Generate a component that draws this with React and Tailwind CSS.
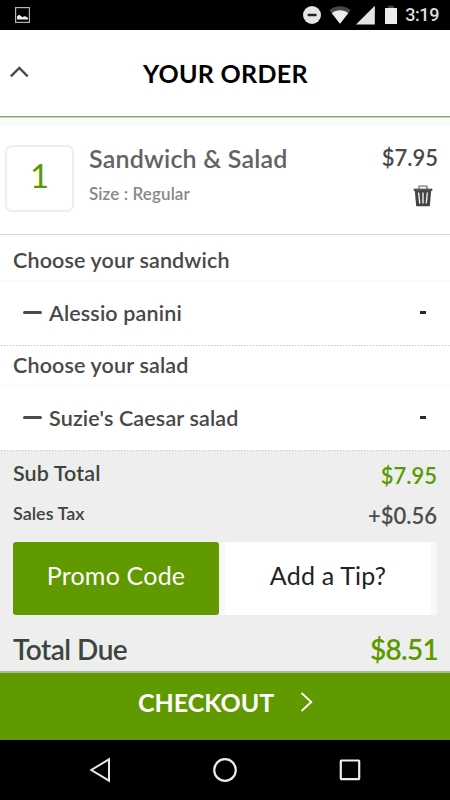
import React from "react";

function StatusBar() {
  return (
    <div className="flex h-[30px] items-center justify-between bg-black pl-[15px] pr-[11px]">
      <svg width="15" height="16" viewBox="0 0 15 16">
        <rect x="0.6" y="0.6" width="13.8" height="14.8" fill="none" stroke="#b4b4b4" strokeWidth="1.2" />
        <path d="M2 12.5V9.5L4 7.7L6 9L7.5 10.2L9 9.3L11 9.4L13 11V12.5Z" fill="#ededed" />
      </svg>
      <div className="flex items-center">
        <svg width="102" height="30" viewBox="0 0 102 30">
          <circle cx="9" cy="15" r="9" fill="#e6e6e6" />
          <rect x="4.6" y="13.8" width="9" height="2.4" rx="0.6" fill="#222" />
          <path d="M26.3 10.3C32.3 4.9 41.7 4.9 47.7 10.3L37 23.8Z" fill="#484848" />
          <path d="M28.8 13.2C33.8 9.4 40.2 9.4 45.2 13.2L37 23.8Z" fill="#ececec" />
          <path d="M53 24.6L71.8 5.8V24.6Z" fill="#e4e4e4" />
          <rect x="85.2" y="5.7" width="5.6" height="3" fill="#444" />
          <rect x="82" y="8" width="12" height="16" rx="0.5" fill="#ececec" />
        </svg>
        <span className="w-[34px] text-right font-[Roboto,sans-serif] text-[18px] font-medium leading-[32px] tracking-[-0.4px] text-[#dedede]">3:19</span>
      </div>
    </div>
  );
}

function Group({ title, option, headClass }) {
  return (
    <section className="text-[21.5px] tracking-[0.15px]">
      <h3 className={`flex items-center border-b-2 border-[#fbfbfb] pl-[13px] ${headClass}`}>{title}</h3>
      <div className="flex h-[63px] items-center pb-px pl-[23px] pr-[24px]">
        <span className="h-[3px] w-[19px] rounded-sm bg-[#4c4c4c]" />
        <span className="ml-[7px]">{option}</span>
        <span className="ml-auto h-[3px] w-[6px] bg-[#2a2a2a]" />
      </div>
      <svg className="block" width="450" height="1">
        <line x1="1" y1="0.5" x2="450" y2="0.5" stroke="#c6c6c6" strokeDasharray="1.5 1.5" />
      </svg>
    </section>
  );
}

export default function App() {
  return (
    <div className="flex h-[800px] w-[450px] flex-col overflow-hidden whitespace-nowrap bg-white font-[Lato,sans-serif] font-semibold text-[#484848]">
      <StatusBar />

      <header className="flex h-[87px] items-center border-b border-[#82a76b] pl-[10px]">
        <svg className="-mt-[2px]" width="19" height="12" viewBox="0 0 19 12">
          <path d="M0.9 10.3L9.3 2L17.7 10.3" fill="none" stroke="#4a4a4a" strokeWidth="2.4" />
        </svg>
        <h1 className="ml-[114px] text-[25px] font-bold leading-[30px] tracking-[0.3px] text-black">YOUR ORDER</h1>
      </header>

      <div className="h-[9px] border-t border-[#c9d8bd] bg-[#fbfbfb]" />

      <section className="flex h-[109px] border-b border-[#d8d8d8]">
        <div className="ml-[5px] mt-[19px] flex h-[67px] w-[69px] justify-center rounded-[7px] border-2 border-[#eeeeee] pt-[8px] text-[33px] font-normal leading-[40px] text-[#589a00]">
          <span>1</span>
        </div>
        <div className="ml-[15px] pt-[17px]">
          <h2 className="text-[25px] leading-[30px] tracking-[0.2px] text-[#636363]">Sandwich &amp; Salad</h2>
          <p className="mt-[10px] text-[17px] leading-[22px] tracking-[0.1px] text-[#888888]">Size : Regular</p>
        </div>
        <div className="ml-auto flex flex-col items-end pr-[12px] pt-[17px]">
          <span className="text-[22px] leading-[30px]">$7.95</span>
          <svg className="mr-[5px] mt-[12px]" width="20" height="22" viewBox="0 0 20 22">
            <path d="M6 4V1.2H14V4" fill="none" stroke="#777" strokeWidth="1.3" />
            <path d="M0.7 3.6H19.3V6H0.7Z" fill="#555" />
            <path d="M1.8 5.5H18.2L16.8 21.3H3.2Z" fill="#444" />
            <path d="M5.6 7.5L6.8 18.5M10 7.5V18.5M14.4 7.5L13.2 18.5" stroke="#eee" strokeWidth="1.4" />
          </svg>
        </div>
      </section>

      <Group title="Choose your sandwich" option="Alessio panini" headClass="h-[47px] pt-[6px]" />
      <Group title="Choose your salad" option="Suzie's Caesar salad" headClass="h-[41px]" />

      <section className="flex h-[221px] flex-col bg-[#eeeeee] px-[13px] text-[#3c463c]">
        <div className="flex h-[44px] justify-between pt-[7px] leading-[30px]">
          <span className="text-[21.5px] tracking-[0.1px]">Sub Total</span>
          <span className="pt-[3px] text-[22px] text-[#589a00]">$7.95</span>
        </div>
        <div className="flex h-[47px] justify-between pt-[2px] leading-[30px]">
          <span className="pt-px text-[18px]">Sales Tax</span>
          <span className="pt-[4px] text-[22px] text-[#4c4c4c]">+$0.56</span>
        </div>
        <div className="flex h-[73px] text-[25px] font-normal leading-[67px] tracking-[0.2px]">
          <div className="w-[206px] rounded-[3px] bg-[#619900] text-center text-white">Promo Code</div>
          <div className="flex w-[218px] rounded-r-[3px] bg-[#f8f8f8] pl-[6px]">
            <div className="w-[206px] bg-white text-center text-[#222]">Add a Tip?</div>
          </div>
        </div>
        <div className="flex justify-between pt-[16px] text-[28px] leading-[36px]">
          <span className="tracking-[-0.5px]">Total Due</span>
          <span className="-mr-px tracking-[-0.7px] text-[#589a00]">$8.51</span>
        </div>
      </section>

      <button className="flex h-[69px] items-center border-t-2 border-[#adb99d] bg-[#619900] pb-[7px] pl-[138px] text-[25px] font-bold text-white">
        <span className="w-[136px] text-left">CHECKOUT</span>
        <svg className="-mt-[3px] ml-[26px]" width="14" height="20" viewBox="0 0 14 20">
          <path d="M1.5 1L11.3 10L1.5 19" fill="none" stroke="#fff" strokeWidth="1.8" />
        </svg>
      </button>

      <nav className="flex h-[60px] items-center bg-black pl-[89px]">
        <svg width="22" height="26" viewBox="0 0 22 26" fill="none" stroke="#e6e6e6" strokeWidth="2">
          <path d="M20 2.3V23.7L2.3 13Z" />
        </svg>
        <svg className="ml-[102px]" width="24" height="26" viewBox="0 0 24 26" fill="none" stroke="#ececec" strokeWidth="2.2">
          <circle cx="12" cy="13" r="10.8" />
        </svg>
        <svg className="ml-[102px]" width="22" height="22" viewBox="0 0 22 22" fill="none" stroke="#ececec" strokeWidth="2.2">
          <rect x="1.8" y="1.5" width="18.4" height="18.6" rx="0.5" />
        </svg>
      </nav>
    </div>
  );
}
